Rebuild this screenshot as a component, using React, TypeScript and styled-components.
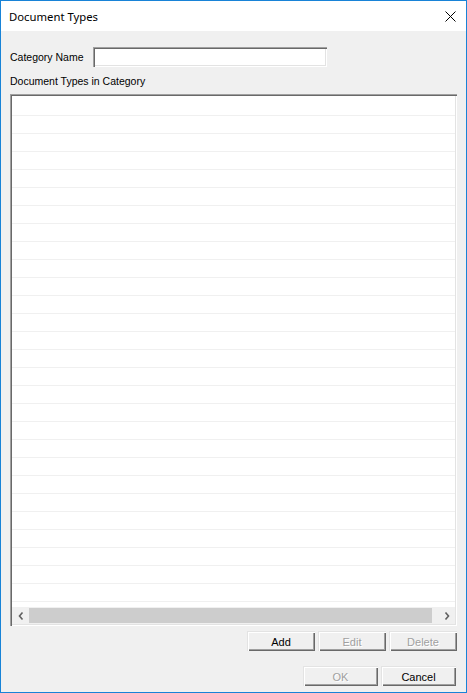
import React from "react";
import styled, { createGlobalStyle } from "styled-components";

const Global = createGlobalStyle`
  html, body { margin: 0; padding: 0; background: #f0f0f0; }
  * { box-sizing: border-box; }
`;

const Window = styled.div`
  width: 467px;
  height: 693px;
  border: 1px solid #1883d7;
  background: #f0f0f0;
  display: flex;
  flex-direction: column;
  font-family: "Liberation Sans", Arial, sans-serif;
  font-size: 10.5px;
  color: #000;
  overflow: hidden;
`;

const TitleBar = styled.div`
  height: 30px;
  background: #fff;
  display: flex;
  align-items: center;
  justify-content: space-between;
  padding-left: 8px;
  padding-right: 10px;
  flex-shrink: 0;
`;

const Title = styled.div`
  font-family: "Noto Sans", "Segoe UI", sans-serif;
  font-size: 11.3px;
  padding-top: 1px;
`;

const CloseButton = styled.div`
  width: 12px;
  height: 12px;
  display: flex;
  align-items: center;
  justify-content: center;
`;

const Content = styled.div`
  flex: 1;
  display: flex;
  flex-direction: column;
  padding: 16px 9px 0 9px;
`;

const NameRow = styled.div`
  display: flex;
  align-items: center;
  height: 20px;
`;

const Label = styled.label`
  width: 83px;
  line-height: 14px;
`;

const TextInput = styled.div`
  width: 234px;
  height: 20px;
  background: #fff;
  box-shadow: inset 1px 1px #a0a0a0, inset 2px 2px #696969,
    inset -1px -1px #ffffff, inset -2px -2px #e3e3e3;
`;

const SectionLabel = styled.div`
  line-height: 14px;
  margin-top: 7px;
  margin-bottom: 6px;
`;

const ListBox = styled.div`
  height: 532px;
  background: #fff;
  padding: 2px;
  box-shadow: inset 1px 1px #a0a0a0, inset 2px 2px #696969,
    inset -1px -1px #ffffff, inset -2px -2px #e3e3e3;
  display: flex;
  flex-direction: column;
`;

const Rows = styled.div`
  flex: 1;
  overflow: hidden;
  padding-top: 2px;
`;

const Row = styled.div`
  height: 18px;
  border-bottom: 1px solid #f0f0f0;
`;

const HScroll = styled.div`
  height: 17px;
  background: #f0f0f0;
  display: flex;
  align-items: stretch;
  flex-shrink: 0;
`;

const ArrowBtn = styled.div`
  width: 17px;
  display: flex;
  align-items: center;
  justify-content: center;
`;

const Track = styled.div`
  flex: 1;
  display: flex;
  padding: 1px 6px 1px 0;
`;

const Thumb = styled.div`
  flex: 1;
  background: #cdcdcd;
`;

const ButtonRow = styled.div<{ $top: number; $right: number }>`
  display: flex;
  justify-content: flex-end;
  gap: 3px;
  margin-top: ${(p) => p.$top}px;
  padding-right: ${(p) => p.$right}px;
`;

const Button = styled.div<{ $width: number; $disabled?: boolean }>`
  width: ${(p) => p.$width}px;
  height: 20px;
  background: #f0f0f0;
  display: flex;
  align-items: center;
  justify-content: center;
  font-size: 11px;
  box-shadow: inset 1px 1px #e3e3e3, inset 2px 2px #ffffff,
    inset -1px -1px #696969, inset -2px -2px #a0a0a0;
  color: ${(p) => (p.$disabled ? "#a0a0a0" : "#000")};
  text-shadow: ${(p) => (p.$disabled ? "1px 1px 0 #ffffff" : "none")};
  padding-top: 1px;
`;

const Chevron = ({ dir }: { dir: "left" | "right" }) => (
  <svg width="6" height="8" viewBox="0 0 6 8">
    <path
      d={dir === "left" ? "M4.5 0.5 L1.5 4 L4.5 7.5" : "M1.5 0.5 L4.5 4 L1.5 7.5"}
      fill="none"
      stroke="#606060"
      strokeWidth="1.6"
    />
  </svg>
);

export default function App() {
  const rows = Array.from({ length: 30 });
  return (
    <>
      <Global />
      <Window>
        <TitleBar>
          <Title>Document Types</Title>
          <CloseButton>
            <svg width="11" height="11" viewBox="0 0 11 11">
              <path d="M0.5 0.5 L10.5 10.5 M10.5 0.5 L0.5 10.5" stroke="#000" strokeWidth="1" />
            </svg>
          </CloseButton>
        </TitleBar>
        <Content>
          <NameRow>
            <Label>Category Name</Label>
            <TextInput />
          </NameRow>
          <SectionLabel>Document Types in Category</SectionLabel>
          <ListBox>
            <Rows>
              {rows.map((_, i) => (
                <Row key={i} />
              ))}
            </Rows>
            <HScroll>
              <ArrowBtn>
                <Chevron dir="left" />
              </ArrowBtn>
              <Track>
                <Thumb />
              </Track>
              <ArrowBtn>
                <Chevron dir="right" />
              </ArrowBtn>
            </HScroll>
          </ListBox>
          <ButtonRow $top={5} $right={0}>
            <Button $width={68}>Add</Button>
            <Button $width={68} $disabled>Edit</Button>
            <Button $width={68} $disabled>Delete</Button>
          </ButtonRow>
          <ButtonRow $top={15} $right={1}>
            <Button $width={75} $disabled>OK</Button>
            <Button $width={75}>Cancel</Button>
          </ButtonRow>
        </Content>
      </Window>
    </>
  );
}
